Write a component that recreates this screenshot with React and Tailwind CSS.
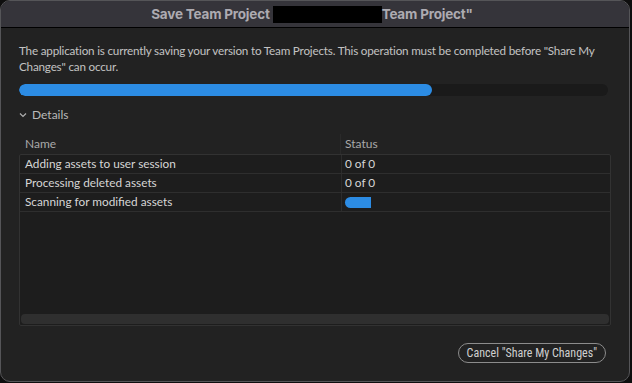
import React from "react";

export default function App() {
  const rows = [
    { name: "Adding assets to user session", status: "0 of 0" },
    { name: "Processing deleted assets", status: "0 of 0" },
    { name: "Scanning for modified assets", status: null },
  ];
  return (
    <div className="w-[632px] h-[383px] bg-[#0e0e0e] overflow-hidden" style={{ fontFamily: "Lato, 'Open Sans', sans-serif" }}>
      <div className="w-[630px] h-[382px] rounded-[10px] border border-[#555558] bg-[#222222] overflow-hidden flex flex-col">
        <div className="h-[27px] shrink-0 bg-[#35343a] border-b border-black flex items-center justify-center pr-[6px]">
          <span className="text-[13.5px] font-bold text-[#adabb1]" style={{ fontFamily: "Inter, sans-serif", letterSpacing: "-0.2px" }}>Save Team Project</span>
          <span className="w-[109px] h-[17px] bg-black ml-[3px]" />
          <span className="text-[13.5px] font-bold text-[#adabb1]" style={{ fontFamily: "Inter, sans-serif", letterSpacing: "-0.2px" }}>Team Project"</span>
        </div>
        <div className="flex flex-col px-[18px] pt-[14px] flex-1">
          <p className="text-[11.7px] leading-[16px] text-[#c2c2c2] whitespace-nowrap" style={{ letterSpacing: "-0.2px" }}>
            The application is currently saving your version to Team Projects. This operation must be completed before "Share My
            <br />
            Changes" can occur.
          </p>
          <div className="mt-[10px] h-[12px] w-[589px] rounded-full bg-[#1a1a1a] overflow-hidden">
            <div className="h-full w-[413px] rounded-full bg-[#2c8ce4]" />
          </div>
          <div className="mt-[11px] flex items-center h-[16px] text-[12px] text-[#b9b9b9]">
            <svg width="8" height="6" viewBox="0 0 8 6" className="mr-[5px]">
              <path d="M1 1.5 L4 4.5 L7 1.5" fill="none" stroke="#b0b0b0" strokeWidth="1.2" />
            </svg>
            <span>Details</span>
          </div>
          <div className="mt-[11px] flex h-[20px] items-center text-[12px] text-[#a9a9a9]">
            <div className="w-[322px] pl-[6px] h-full flex items-center border-r border-[#2a2a2a]">Name</div>
            <div className="pl-[4px]">Status</div>
          </div>
          <div className="w-[592px] h-[172px] bg-[#1d1d1d] border border-[#323232] rounded-[2px] flex flex-col">
            {rows.map((r) => (
              <div key={r.name} className="h-[19px] flex items-center border-b border-[#2e2e2e] text-[11.8px] text-[#d6d6d6]">
                <div className="w-[322px] pl-[5px] h-full flex items-center border-r border-[#2c2c2c]">{r.name}</div>
                <div className="pl-[3px] flex items-center">
                  {r.status ? r.status : <div className="w-[26px] h-[11px] bg-[#2c8ce4] rounded-l-full rounded-r-[1px]" />}
                </div>
              </div>
            ))}
            <div className="flex-1" />
            <div className="h-[10px] mx-[1px] mb-[1px] rounded-[4px] bg-[#2f2f2f]" />
          </div>
          <div className="mt-[17px] flex justify-end pr-[5px]">
            <button className="h-[20px] px-[8px] rounded-full border border-[#8c8c8c] text-[12px] text-[#cfcfcf] leading-none" style={{ fontFamily: "'Liberation Sans Narrow', 'Roboto Condensed', Lato, sans-serif" }}>
              Cancel "Share My Changes"
            </button>
          </div>
        </div>
      </div>
    </div>
  );
}
